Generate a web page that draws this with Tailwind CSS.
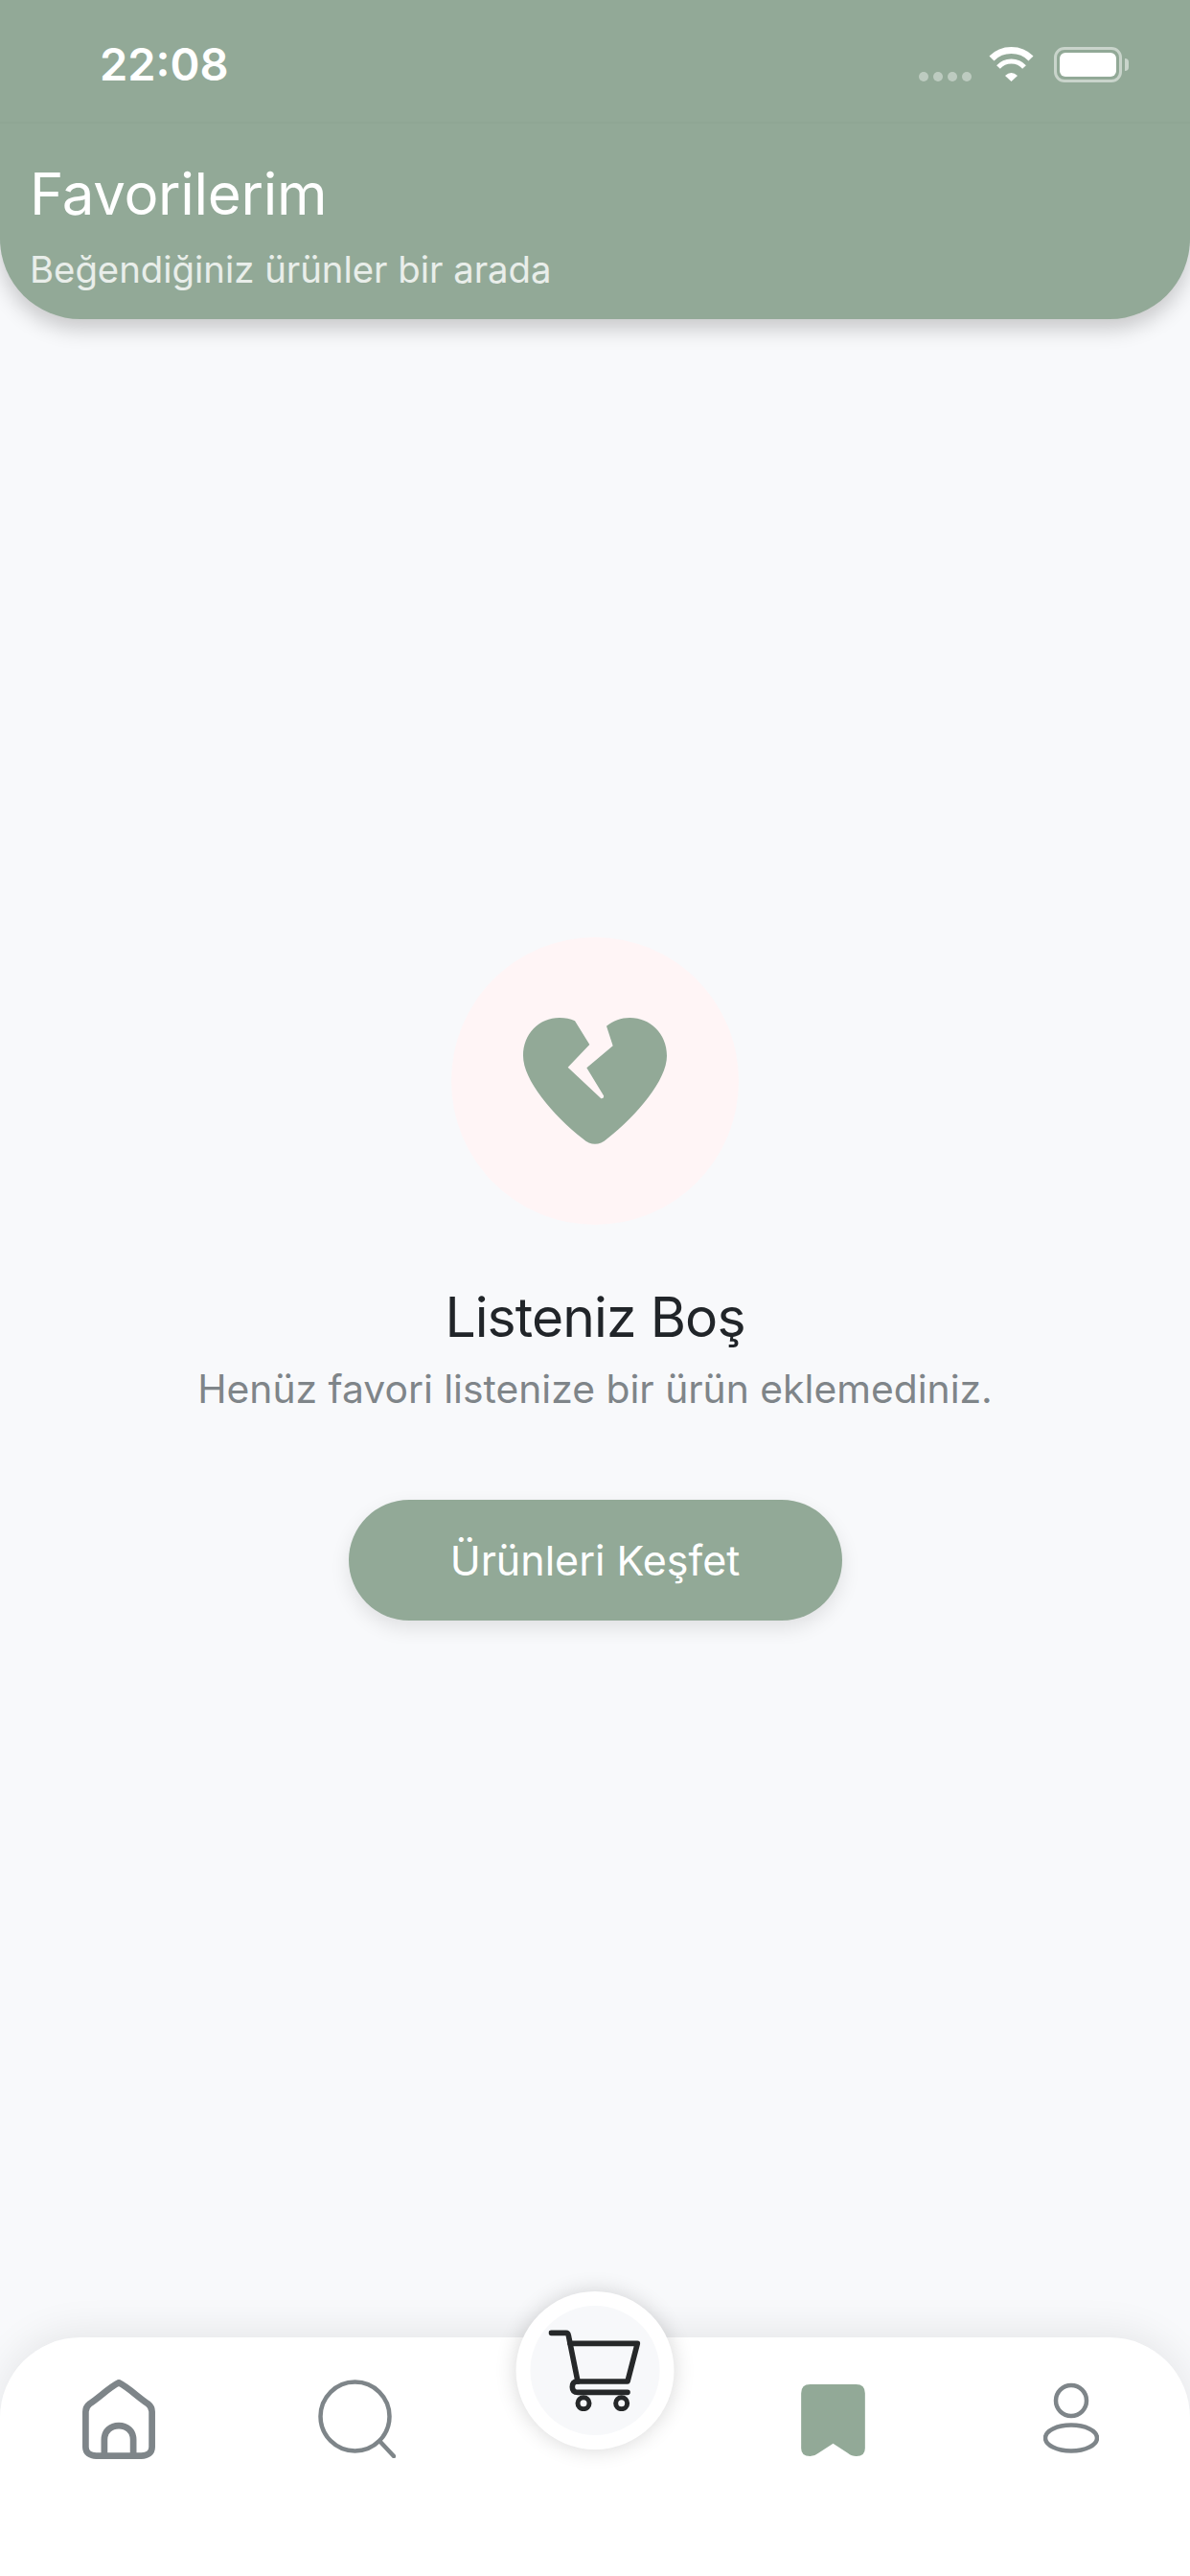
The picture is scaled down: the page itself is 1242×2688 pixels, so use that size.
<!DOCTYPE html>
<html lang="tr">
<head>
  <meta charset="UTF-8" />
  <title>Favorilerim</title>
  <script src="https://cdn.jsdelivr.net/npm/@tailwindcss/browser@4"></script>
</head>
<body class="bg-[#f8f9fb]">
<div class="w-[1242px] h-[2688px] flex flex-col overflow-hidden font-['Inter',sans-serif]">

  <!-- Header -->
  <header class="relative z-10 h-[333px] shrink-0 bg-[#92a997] rounded-b-[84px] shadow-[0_10px_22px_rgba(0,0,0,0.2)]">
    <div class="h-[129px] flex items-start justify-between pl-[104px] pr-[64px] border-b-2 border-black/[0.015]">
      <span class="text-[47px] leading-[56px] mt-[39px] font-semibold text-white">22:08</span>
      <div class="flex items-start mt-[49px]">
        <div class="flex gap-[5px] mt-[26px] mr-[18px]">
          <span class="w-[10px] h-[10px] rounded-full bg-white/40"></span>
          <span class="w-[10px] h-[10px] rounded-full bg-white/40"></span>
          <span class="w-[10px] h-[10px] rounded-full bg-white/40"></span>
          <span class="w-[10px] h-[10px] rounded-full bg-white/40"></span>
        </div>
        <svg class="w-[47px] h-[36px] mr-[21px]" viewBox="0 0 47 36" fill="none" stroke="white">
          <path d="M3 12C14 .7 33 .7 44 12" stroke-width="7" />
          <path d="M10 21C17 13 30 13 37 21" stroke-width="5" />
          <path d="M17 30Q23.5 24 30 30L23.5 36Z" fill="white" stroke="none" />
        </svg>
        <div class="w-[71px] h-[37px] rounded-[11px] border-[3px] border-white/50 p-[3px]">
          <div class="w-full h-full rounded-[6px] bg-white"></div>
        </div>
        <div class="w-[4px] h-[13px] mt-[12px] ml-[3px] rounded-r-full bg-white/50"></div>
      </div>
    </div>
    <div class="pl-[31px] pt-[37px]">
      <h1 class="text-[60px] leading-[72px] tracking-[-0.3px] font-normal text-white">Favorilerim</h1>
      <p class="text-[38.3px] leading-[46px] mt-[20px] text-white/80">Beğendiğiniz ürünler bir arada</p>
    </div>
  </header>

  <!-- Empty state -->
  <main class="flex-1 flex flex-col items-center justify-center pb-[103px]">
    <div class="w-[300px] h-[300px] rounded-full bg-[#fff5f6] flex items-center justify-center">
      <svg class="w-[150px] h-[132px]" viewBox="318 306 450 396" fill="#92a997">
        <path d="M480 316C465 309 450 306 432 306C368 306 318 356 318 425C318 500 410 610 505 685C530 707 556 707 581 685C676 610 768 500 768 425C768 356 716 306 652 306C625 306 600 316 579 332L599 394L517 463L570 550Q572 560 562 559L458 461L526 390Z" />
      </svg>
    </div>
    <h2 class="text-[57px] leading-[70px] tracking-[-0.9px] mt-[62px] text-[#212529]">Listeniz Boş</h2>
    <p class="text-[40.8px] leading-[50px] mt-[14px] text-[#7f8589]">Henüz favori listenize bir ürün eklemediniz.</p>
    <button class="w-[515px] h-[126px] mt-[91px] rounded-full bg-[#92a997] text-white text-[43px] shadow-[0_8px_20px_rgba(0,0,0,0.1)]">Ürünleri Keşfet</button>
  </main>

  <!-- Tab bar -->
  <nav class="relative h-[249px] shrink-0 bg-white rounded-t-[84px] shadow-[0_-6px_40px_rgba(0,0,0,0.08)] grid grid-cols-5 items-start pt-[44px]">
    <div class="flex justify-center">
      <svg class="w-[76px] h-[83px]" viewBox="262 375 226 247" fill="none" stroke="#7e8589" stroke-width="20" stroke-linejoin="round">
        <path d="M375 385C345 400 315 430 285 450C275 458 272 465 272 475V585C272 602 285 612 305 612H445C465 612 478 602 478 585V475C478 465 475 458 465 450C435 430 405 400 375 385Z" />
        <path d="M330 610V562C330 535 350 518 375 518C400 518 420 535 420 562V610" />
      </svg>
    </div>
    <div class="flex justify-center">
      <svg class="w-[81px] h-[82px]" viewBox="0 0 81 82" fill="none" stroke="#7e8589" stroke-width="4.5" stroke-linecap="round">
        <circle cx="38.5" cy="38.5" r="36" />
        <path d="M65 65L79 80" />
      </svg>
    </div>
    <div class="relative">
      <div class="absolute left-1/2 -translate-x-1/2 -top-[92px] w-[165px] h-[165px] rounded-full bg-white shadow-[0_0_22px_rgba(0,0,0,0.16)] flex items-center justify-center">
        <div class="w-[135px] h-[135px] rounded-full bg-[#f7f8fa] flex items-center justify-center">
          <svg class="w-[96px] h-[85px]" viewBox="283 213 287 255" fill="none" stroke="#262829" stroke-width="17" stroke-linecap="round" stroke-linejoin="round">
            <path d="M291 223H338C342 223 344 226 345 231L374 375" />
            <path d="M350 256H561L530 375H372C358 375 357 385 357 392C357 403 363 409 375 409H530" />
            <circle cx="392" cy="443" r="18" stroke-width="15" />
            <circle cx="511" cy="443" r="18" stroke-width="15" />
          </svg>
        </div>
      </div>
    </div>
    <div class="flex justify-center pt-[5px]">
      <svg class="w-[67px] h-[75px]" viewBox="172 385 200 225" fill="#92a997">
        <path d="M200 385H344Q372 385 372 413V585Q372 610 345 610Q330 610 318 600L272 570L226 600Q214 610 200 610Q172 610 172 585V413Q172 385 200 385Z" />
      </svg>
    </div>
    <div class="flex justify-center pt-[3px]">
      <svg class="w-[58px] h-[76px]" viewBox="0 0 58 76" fill="none" stroke="#7e8589" stroke-width="4.5">
        <circle cx="29" cy="19" r="16" />
        <ellipse cx="29" cy="58" rx="27" ry="13.5" />
      </svg>
    </div>
  </nav>
</div>
</body>
</html>
